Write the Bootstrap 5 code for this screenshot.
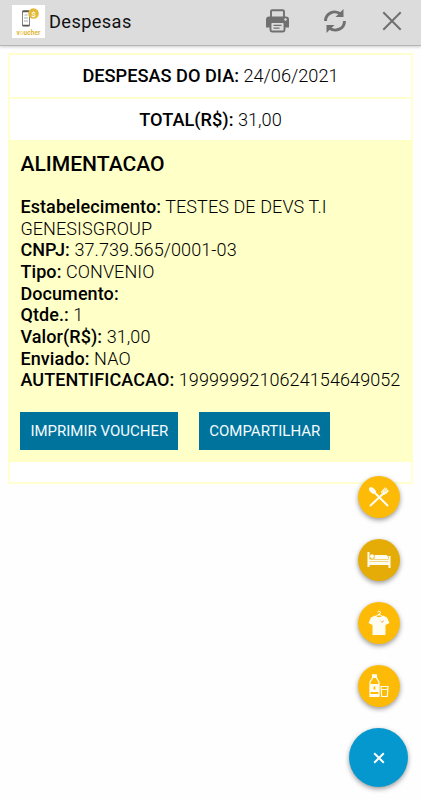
<!DOCTYPE html>
<html lang="pt-BR">
<head>
<meta charset="utf-8">
<meta name="viewport" content="width=device-width, initial-scale=1">
<title>Despesas</title>
<link href="https://cdn.jsdelivr.net/npm/bootstrap@5.3.0/dist/css/bootstrap.min.css" rel="stylesheet">
<style>
body{font-family:Roboto,"Liberation Sans",sans-serif;font-size:18px;font-weight:300;line-height:21.65px;color:#000;background:#fefefe;height:800px;overflow:hidden}
b{font-weight:500;color:#000}
.details{letter-spacing:.09px}
.topbar{height:46px;background:#dcdcdc;border-bottom:1px solid #b5b5b5;box-shadow:0 1px 3px rgba(0,0,0,.2);padding:0 19px 3px 12px}
.topbar h1{font-size:18.2px;font-weight:400;letter-spacing:.4px;color:#111;padding-top:2px}
.tools{gap:35px;color:#707070}
.tools svg:first-child{margin-right:-2px}
.sheet{margin:7px 8px 0;width:405px;height:431px;border:2px solid #ffffcf;background:#fff}
.line-head{height:44px;border-bottom:2px solid #ffffcf;font-size:18.2px}
.line-total{height:41px;font-size:18.2px}
.entry{background:#ffffc8;margin:0 -2px;padding:13.4px 12.4px 0;height:322px}
.entry h2{font-size:21.1px;font-weight:500;line-height:22px;color:#000;margin-bottom:20.6px}
.actions{margin-top:21.4px;gap:21px}
.btn-act{background:#00739d;color:#f4fbfd;font-size:15px;line-height:18px;height:38px;border:0;border-radius:0;padding:0 10px}
.btn-act:hover{background:#00628a;color:#fff}
.fabs{right:13px;bottom:13px;gap:21.1px}
.fab{width:42px;height:42px;border:0;background:#fdbb08;color:#fffdf0;padding:0;box-shadow:0 2px 5px rgba(0,0,0,.4)}
.fab.pressed{background:#e5ac08}
.fab.main-fab{width:59px;height:59px;background:#0598cf}
.fab-stack{width:59px}
</style>
<script src="https://cdn.jsdelivr.net/npm/bootstrap@5.3.0/dist/js/bootstrap.bundle.min.js"></script>
</head>
<body>
<header class="topbar d-flex align-items-center justify-content-between">
  <div class="d-flex align-items-center">
    <svg width="33" height="33" viewBox="0 0 33 33" aria-hidden="true">
      <rect width="33" height="33" fill="#fff"/>
      <rect x="10.500" y="5.500" width="7" height="15.500" rx="1" fill="#fff" stroke="#666" stroke-width=".8"/>
      <path d="M10.500 6.500h7M10.500 20.500h7" stroke="#555" stroke-width="1.300"/>
      <path d="M12.500 10h3M12 13h4M12 16h4" stroke="#aaa"/>
      <circle cx="21.500" cy="8.500" r="5.300" fill="#e4b936"/>
      <text x="21.500" y="11.500" text-anchor="middle" font-size="8" font-weight="500" fill="#fff">$</text>
      <text x="4.500" y="29.500" font-size="6.500" font-weight="700" fill="#dfb536" textLength="24">v<tspan fill="#f3dda0">o</tspan>ucher</text>
    </svg>
    <h1 class="mb-0 ms-1">Despesas</h1>
  </div>
  <div class="tools d-flex align-items-center">
    <svg width="25" height="24" viewBox="0 0 25 24" aria-label="Imprimir">
      <path d="M6 8.500V2.500Q6 1.200 7.300 1.200H17.700Q19 1.200 19 2.500V8.500" fill="none" stroke="currentColor" stroke-width="1.900"/>
      <path d="M4 7.500H21Q24 7.500 24 10.500V18.500H20V13H5V18.500H1V10.500Q1 7.500 4 7.500Z" fill="currentColor"/>
      <rect x="5.500" y="13" width="14" height="9.500" rx="1.500" fill="#dcdcdc" stroke="currentColor" stroke-width="1.900"/>
      <path d="M8.500 16.300h8M8.500 19.200h6" stroke="currentColor" stroke-width="1.300"/><circle cx="20.500" cy="10.500" r="1.200" fill="#dcdcdc"/>
    </svg>
    <svg width="24" height="26" viewBox="0 0 24 26" fill="none" stroke="currentColor" stroke-width="2.900" aria-label="Atualizar">
      <path d="M2.500 13C2.500 5.500 11 1 18 6.200M21.500 13C21.500 20.500 13 25 6 19.800"/>
      <path d="M20.500 1V9H12.500Z M3.500 25V17H11.500Z" fill="currentColor" stroke="none"/>
    </svg>
    <svg width="20" height="20" viewBox="0 0 20 20" aria-label="Fechar"><path d="M1.300 1.300L18.700 18.700M18.700 1.300L1.300 18.700" stroke="currentColor" stroke-width="2"/></svg>
  </div>
</header>
<main class="sheet">
  <div class="line-head d-flex align-items-center justify-content-center"><span><b>DESPESAS DO DIA:</b> 24/06/2021</span></div>
  <div class="line-total d-flex align-items-center justify-content-center"><span><b>TOTAL(R$):</b> 31,00</span></div>
  <section class="entry">
    <h2>ALIMENTACAO</h2>
    <div class="details text-nowrap">
      <div><b>Estabelecimento:</b> TESTES DE DEVS T.I<br>GENESISGROUP</div>
      <div><b>CNPJ:</b> 37.739.565/0001-03</div>
      <div><b>Tipo:</b> CONVENIO</div>
      <div><b>Documento:</b></div>
      <div><b>Qtde.:</b> 1</div>
      <div><b>Valor(R$):</b> 31,00</div>
      <div><b>Enviado:</b> NAO</div>
      <div><b>AUTENTIFICACAO:</b> 1999999210624154649052</div>
    </div>
    <div class="actions d-flex">
      <button class="btn btn-act">IMPRIMIR VOUCHER</button>
      <button class="btn btn-act">COMPARTILHAR</button>
    </div>
  </section>
</main>
<nav class="fabs fab-stack position-fixed d-flex flex-column align-items-center">
  <button class="fab rounded-circle d-flex align-items-center justify-content-center" aria-label="Alimentação">
    <svg width="22" height="22" viewBox="0 0 22 22"><ellipse cx="4.500" cy="4.500" rx="2.500" ry="4" transform="rotate(-48 4.500 4.500)" fill="currentColor"/><path d="M6 6L19.500 19.500M16 7L2.500 19.500" stroke="currentColor" stroke-width="2" stroke-linecap="round"/><path d="M14.500 7.500L13.500 6L17.500 1.500M16 7.500L20 4M15 6L19 2.500M14 8Q17 9.500 20.500 4.500" fill="none" stroke="currentColor" stroke-width="1.100"/></svg>
  </button>
  <button class="fab pressed rounded-circle d-flex align-items-center justify-content-center" aria-label="Hospedagem">
    <svg width="24" height="16" viewBox="0 0 24 16" fill="currentColor"><path d="M.5 0H2.500V7.500H21.500V4H23.500V16H21.500V13H2.500V15H.5Z"/><circle cx="5" cy="4.200" r="2"/><path d="M7.500 3H19.500Q21 3.500 21 5.500V7H3.500V6.500H7.500Z"/><path d="M2.500 9.500H21.500" stroke="#e5ac08" stroke-width=".5"/></svg>
  </button>
  <button class="fab rounded-circle d-flex align-items-center justify-content-center" aria-label="Vestuário">
    <svg width="22" height="26" viewBox="0 0 22 26"><path d="M11 6V4Q13 3.500 12.500 2Q11 0 9.500 2M11 4L7.500 6.500M11 4L14.500 6.500" fill="none" stroke="currentColor"/><path d="M7 5.500Q11 9 15 5.500L19 7.500L21.500 13L17.500 15V25H4.500V15L.5 13L3 7.500Z" fill="currentColor"/><path d="M12.500 11l2 1.500l1-2" fill="none" stroke="#f5b36d" stroke-width="1"/></svg>
  </button>
  <button class="fab rounded-circle d-flex align-items-center justify-content-center" aria-label="Bebidas">
    <svg width="20" height="24" viewBox="0 0 20 24"><path d="M3.500 1H7.500V4L10 8V22.500H1V8L3.500 4Z" fill="none" stroke="currentColor" stroke-width="1.200"/><path d="M3 .5H8V4H3ZM1 10H10V18H1ZM1 20H10V22.500H1Z" fill="currentColor"/><path d="M5.500 12.500V15.500" stroke="#fdbb08" stroke-width="1.800"/><path d="M12 12.500H19L18.300 22.500H12.700Z" fill="none" stroke="currentColor" stroke-width="1.200"/><path d="M12.500 15.500H18.500" stroke="currentColor"/></svg>
  </button>
  <button class="fab main-fab rounded-circle d-flex align-items-center justify-content-center" aria-label="Fechar menu">
    <svg width="12" height="12" viewBox="0 0 12 12"><path d="M1.200 1.200L10.800 10.800M10.800 1.200L1.200 10.800" stroke="currentColor" stroke-width="2"/></svg>
  </button>
</nav>
</body>
</html>
